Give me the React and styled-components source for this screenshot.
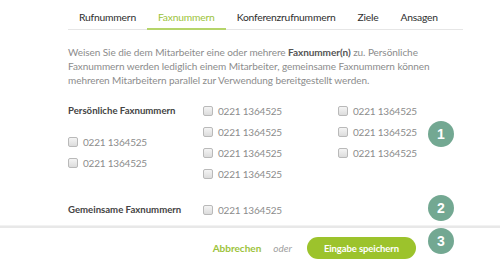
import React from 'react';
import styled, { createGlobalStyle } from 'styled-components';

const GlobalStyle = createGlobalStyle`
  html, body {
    margin: 0;
    padding: 0;
    background: #ffffff;
    font-family: 'Lato', 'Open Sans', sans-serif;
  }
`;

const Page = styled.div`
  width: 500px;
  height: 268px;
  overflow: hidden;
  display: flex;
  flex-direction: column;
`;

const Content = styled.div`
  padding: 0 0 0 68px;
  flex: 1;
`;

const Tabs = styled.ul`
  display: flex;
  width: 395px;
  height: 29px;
  margin: 0;
  padding: 0;
  list-style: none;
  border-bottom: 1px solid #e6e6e6;
`;

const Tab = styled.li`
  padding: 10px 11px 4px 11px;
  height: 14px;
  line-height: 14px;
  font-size: 10.3px;
  letter-spacing: -0.2px;
  color: ${({ $active }) => ($active ? '#9cc33b' : '#2e2e2e')};
  border-bottom: 2px solid ${({ $active }) => ($active ? '#b5d46a' : 'transparent')};
  white-space: nowrap;
`;

const Intro = styled.p`
  margin: 15px 0 0 0;
  font-size: 10px;
  line-height: 14px;
  letter-spacing: -0.06px;
  color: #8c8c8c;

  b {
    color: #555555;
  }
`;

const Section = styled.div`
  display: grid;
  grid-template-columns: 135px 135px 90px 26px;
  margin-top: ${({ $top }) => $top}px;
`;

const Column = styled.div`
  display: flex;
  flex-direction: column;
  gap: 7px;
`;

const Label = styled.div`
  font-size: 9.6px;
  font-weight: bold;
  color: #444444;
  height: 14px;
  line-height: 14px;
  white-space: nowrap;
  margin-bottom: ${({ $space }) => $space || 0}px;
`;

const Check = styled.label`
  display: flex;
  align-items: center;
  gap: 5px;
  height: 14px;
  font-size: 10px;
  letter-spacing: -0.2px;
  color: #8c8c8c;
  white-space: nowrap;
`;

const Box = styled.span`
  width: 8px;
  height: 8px;
  border: 1px solid #b9b9b9;
  border-radius: 2px;
  background: linear-gradient(#f4f4f4, #dcdcdc);
`;

const Badge = styled.div`
  width: 26px;
  height: 26px;
  border-radius: 50%;
  background: #73a892;
  color: #ffffff;
  font-family: 'Liberation Sans', sans-serif;
  font-size: 14px;
  font-weight: bold;
  display: flex;
  align-items: center;
  justify-content: center;
  align-self: start;
  margin-top: ${({ $top }) => $top || 0}px;
`;

const Footer = styled.div`
  height: 40px;
  border-top: 2px solid #e8e8e8;
  box-shadow: 0 -1px 0 #f2f2f2;
  display: flex;
  align-items: center;
  justify-content: flex-end;
  padding-right: 46px;
`;

const CancelLink = styled.a`
  font-size: 10px;
  font-weight: bold;
  color: #9cc33b;
  text-decoration: none;
`;

const Or = styled.span`
  font-size: 10px;
  font-style: italic;
  color: #a0a0a0;
  margin: 0 15px 0 12px;
`;

const SaveButton = styled.button`
  width: 109px;
  height: 22px;
  border: none;
  border-radius: 11px;
  background: #9cc32c;
  color: #ffffff;
  font-family: inherit;
  font-size: 9.5px;
  letter-spacing: -0.1px;
  font-weight: bold;
  padding: 0;
  margin-right: 12px;
`;

const Item = ({ children }) => (
  <Check>
    <Box />
    {children}
  </Check>
);

const num = '0221 1364525';

export default function App() {
  return (
    <Page>
      <GlobalStyle />
      <Content>
        <Tabs>
          <Tab>Rufnummern</Tab>
          <Tab $active>Faxnummern</Tab>
          <Tab>Konferenzrufnummern</Tab>
          <Tab>Ziele</Tab>
          <Tab>Ansagen</Tab>
        </Tabs>
        <Intro>
          Weisen Sie die dem Mitarbeiter eine oder mehrere <b>Faxnummer(n)</b> zu. Persönliche
          <br />
          Faxnummern werden lediglich einem Mitarbeiter, gemeinsame Faxnummern können
          <br />
          mehreren Mitarbeitern parallel zur Verwendung bereitgestellt werden.
        </Intro>
        <Section $top={17}>
          <Column>
            <Label $space={10}>Persönliche Faxnummern</Label>
            <Item>{num}</Item>
            <Item>{num}</Item>
          </Column>
          <Column>
            <Item>{num}</Item>
            <Item>{num}</Item>
            <Item>{num}</Item>
            <Item>{num}</Item>
          </Column>
          <Column>
            <Item>{num}</Item>
            <Item>{num}</Item>
            <Item>{num}</Item>
          </Column>
          <Badge $top={17}>1</Badge>
        </Section>
        <Section $top={22}>
          <Column>
            <Label>Gemeinsame Faxnummern</Label>
          </Column>
          <Column>
            <Item>{num}</Item>
          </Column>
          <Column />
          <Badge $top={-8}>2</Badge>
        </Section>
      </Content>
      <Footer>
        <CancelLink href="#">Abbrechen</CancelLink>
        <Or>oder</Or>
        <SaveButton>Eingabe speichern</SaveButton>
        <Badge>3</Badge>
      </Footer>
    </Page>
  );
}
